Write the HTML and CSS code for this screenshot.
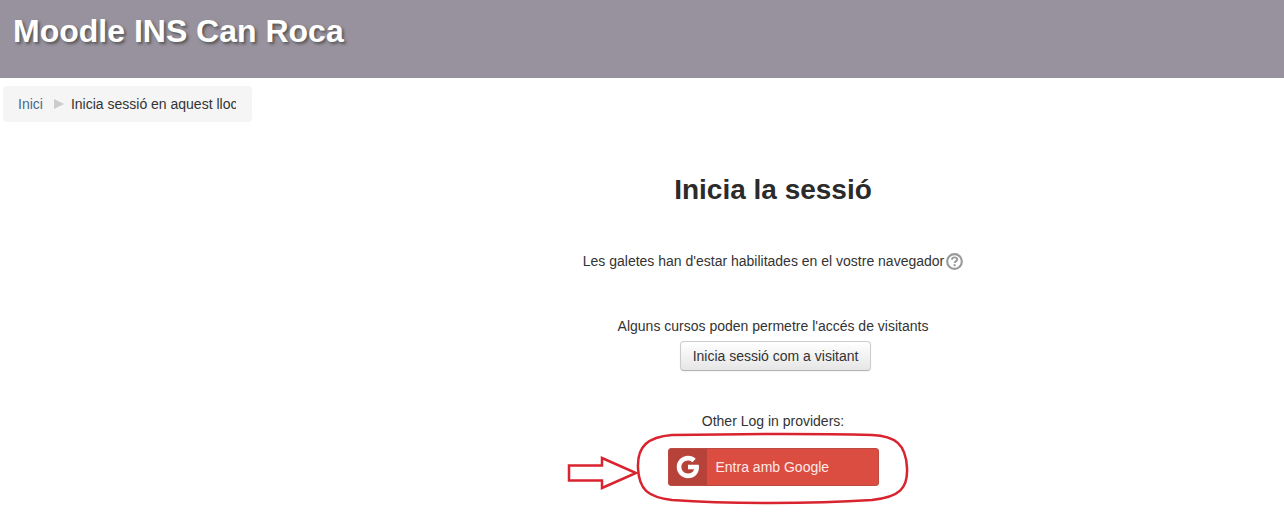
FILE: index.html
```html
<!DOCTYPE html>
<html lang="ca">
<head>
    <meta charset="UTF-8">
    <title>Moodle INS Can Roca</title>
    <link rel="stylesheet" href="styles.css">
</head>
<body>
    <header class="site-header">
        <h1 class="site-title">Moodle INS Can Roca</h1>
    </header>

    <nav class="breadcrumb">
        <a href="#">Inici</a>
        <span class="crumb-sep"></span>
        <span class="crumb-current">Inicia sessió en aquest lloc</span>
    </nav>

    <main class="login-box">
        <h2 class="login-title">Inicia la sessió</h2>

        <p class="cookies-note">
            Les galetes han d'estar habilitades en el vostre navegador
            <svg class="help-icon" viewBox="0 0 16 16" width="17" height="17">
                <circle cx="8" cy="8" r="6.9" fill="none" stroke="#999" stroke-width="2"/>
                <path d="M5.600 6.300C5.700 4.800 6.800 4.100 8 4.100c1.500 0 2.500.9 2.500 2 0 1.900-2.400 1.700-2.400 3.400" fill="none" stroke="#999" stroke-width="1.800"/>
                <rect x="7.100" y="10.600" width="2" height="1.800" fill="#999"/>
            </svg>
        </p>

        <p class="guest-note">Alguns cursos poden permetre l'accés de visitants</p>
        <button class="guest-btn">Inicia sessió com a visitant</button>

        <p class="providers-note">Other Log in providers:</p>
        <a class="google-btn" href="#">
            <span class="google-icon">
                <svg viewBox="0 0 24 24" width="30" height="30">
                    <path d="M20.600 10.200H12v3.600h4.900c-.7 2.300-2.600 3.400-4.900 3.400-3 0-5.300-2.300-5.300-5.200S9 6.800 12 6.800c1.400 0 2.600.5 3.500 1.300l2.700-2.700C16.600 3.900 14.400 3 12 3c-5 0-9 4-9 9s4 9 9 9c5.200 0 8.800-3.600 8.800-8.800 0-.7-.1-1.400-.2-2z" fill="#fff"/>
                </svg>
            </span>
            <span class="google-label">Entra amb Google</span>
        </a>
    </main>

    <!-- hand drawn marks on top of the screenshot -->
    <svg class="markup" width="1284" height="516" viewBox="0 0 1284 516">
        <path d="M569 465.500H602V458L636 473L602 488V480.500H569Z" fill="#fff" stroke="#d9232e" stroke-width="2.500"/>
        <path d="M672 435C730 434 800 433 872 435C895 436 906 444 907 468C908 488 900 497 872 500C810 504 730 504 672 500C648 497 639 490 638 468C637 446 648 437 672 435Z" fill="none" stroke="#d9232e" stroke-width="2.500"/>
    </svg>
</body>
</html>
```

FILE: styles.css
```css
body {
    margin: 0;
    font-family: "Liberation Sans", Arial, sans-serif;
    font-size: 14px;
    color: #333;
    background: #fff;
    position: relative;
    height: 516px;
    overflow: hidden;
}

.site-header {
    height: 78px;
    background: #98929e;
    padding: 13px 13px 0;
    box-sizing: border-box;
}

.site-title {
    margin: 0;
    font-size: 32px;
    line-height: 36px;
    font-weight: bold;
    color: #fff;
    text-shadow: 2px 2px 3px #555;
}

.breadcrumb {
    display: flex;
    align-items: center;
    width: 249px;
    height: 36px;
    margin: 8px 0 0 3px;
    padding-left: 15px;
    box-sizing: border-box;
    background: #f5f5f5;
    border-radius: 4px;
}

.breadcrumb a {
    color: #476a8d;
    text-decoration: none;
}

.crumb-sep {
    width: 0;
    height: 0;
    margin: 0 7px 0 11px;
    border-left: 10px solid #ccc;
    border-top: 5px solid transparent;
    border-bottom: 5px solid transparent;
}

.crumb-current {
    white-space: nowrap;
    overflow: hidden;
    width: 165px;
}

.login-box {
    display: flex;
    flex-direction: column;
    align-items: center;
    margin-left: 262px;
    padding-top: 52px;
}

.login-title {
    margin: 0;
    font-size: 28px;
    line-height: 32px;
    font-weight: bold;
    color: #2b2b2b;
}

.cookies-note {
    display: flex;
    align-items: center;
    gap: 2px;
    margin: 45px 0 0 0;
    height: 20px;
    line-height: 20px;
}

.guest-note {
    margin: 45px 0 0 0;
    line-height: 20px;
}

.guest-btn {
    width: 191px;
    height: 30px;
    margin: 5px 0 0 5px;
    padding: 0;
    font-family: inherit;
    font-size: 14px;
    color: #333;
    background: linear-gradient(#fff, #e6e6e6);
    border: 1px solid #ccc;
    border-bottom-color: #b3b3b3;
    border-radius: 4px;
    box-shadow: 0 1px 2px rgba(0, 0, 0, 0.05);
}

.providers-note {
    margin: 40px 0 0 0;
    line-height: 20px;
}

.google-btn {
    display: flex;
    align-items: center;
    width: 211px;
    height: 38px;
    margin-top: 17px;
    color: #fbe9e7;
    text-decoration: none;
    background: #db4d41;
    border: 1px solid #bd4a40;
    box-sizing: border-box;
    border-radius: 3px;
    font-size: 14px;
}

.google-icon {
    display: flex;
    align-items: center;
    justify-content: center;
    width: 38px;
    height: 100%;
    background: #b6423a;
    border-radius: 2px 0 0 2px;
}

.google-label {
    margin-left: 9px;
}

.markup {
    position: absolute;
    left: 0;
    top: 0;
    pointer-events: none;
}
```
